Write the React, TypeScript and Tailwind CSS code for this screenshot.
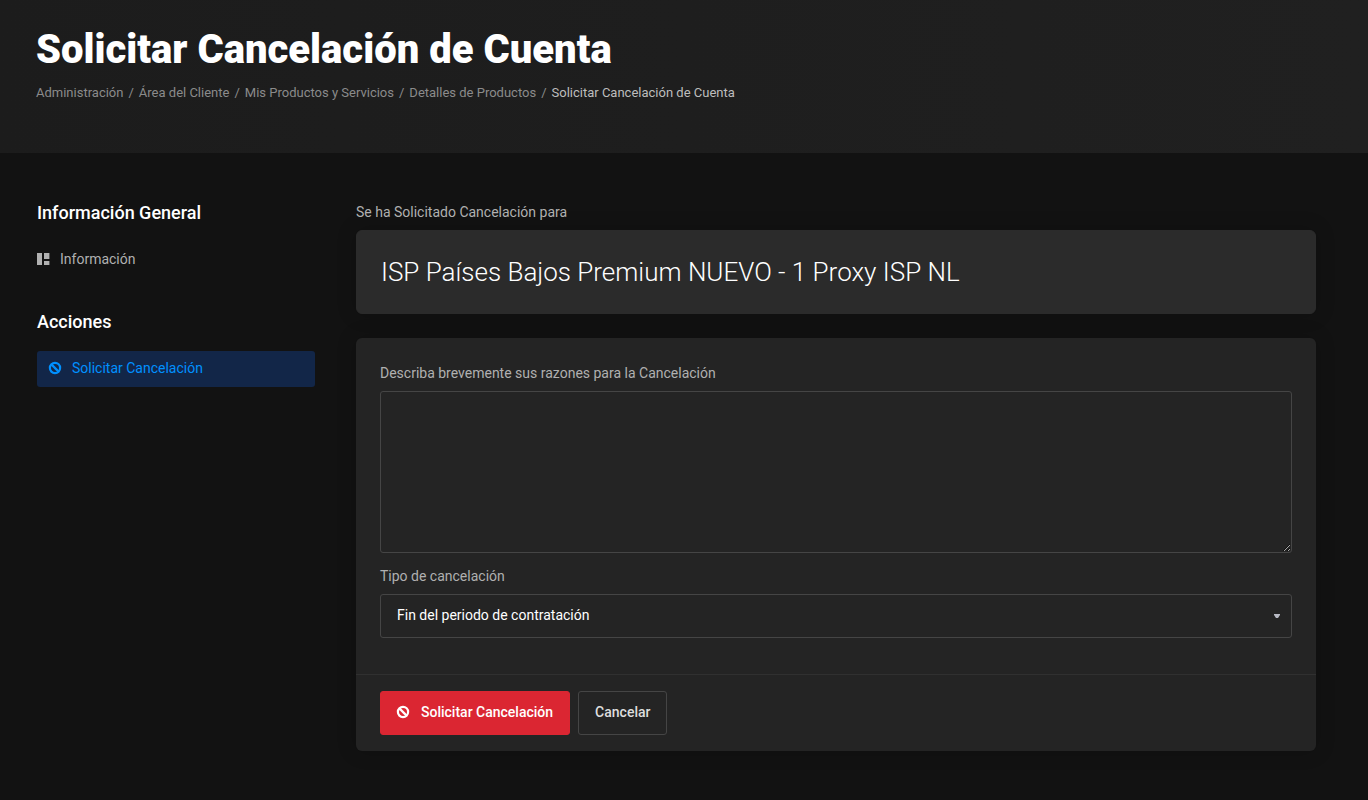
import { useState } from 'react'
import { clsx } from 'clsx'

const BREADCRUMBS = [
  'Administración',
  'Área del Cliente',
  'Mis Productos y Servicios',
  'Detalles de Productos',
]

function BanIcon() {
  return (
    <svg viewBox="0 0 13 12" className="w-[13px] h-3 shrink-0 overflow-visible" fill="none" stroke="currentColor" strokeWidth="2.2" aria-hidden="true">
      <circle cx="6" cy="6" r="5.1" />
      <path d="M2.4 2.4l7.2 7.2" />
    </svg>
  )
}

function PanelIcon() {
  return (
    <svg viewBox="0 0 13 12" className="w-[13px] h-3 shrink-0" fill="currentColor" aria-hidden="true">
      <path d="M0 0h5v12H0zM7 0h5.4v6H7zM7 8h5.4v4H7z" />
    </svg>
  )
}

function PageHeader() {
  return (
    <header className="bg-linear-to-r from-[#1c1c1c] to-[#202020] pl-9 pr-[52px] pt-6 pb-[50px]">
      <h1 className="text-[40px] leading-[52px] font-black text-white">Solicitar Cancelación de Cuenta</h1>
      <nav aria-label="Breadcrumb" className="mt-1.5">
        <ol className="flex flex-wrap text-[13px] leading-[21px] text-[#8b8b8b]">
          {BREADCRUMBS.map(label => (
            <li key={label}>
              <a href="#" className="hover:text-white">{label}</a>
              <span className="px-[5px]">/</span>
            </li>
          ))}
          <li aria-current="page" className="text-[#bdbdbd]">Solicitar Cancelación de Cuenta</li>
        </ol>
      </nav>
    </header>
  )
}

function Sidebar() {
  return (
    <aside className="w-[278px] shrink-0 space-y-8">
      <section>
        <h2 className="mb-[17px] text-lg leading-6 font-medium text-white">Información General</h2>
        <a href="#" className="flex items-center gap-2.5 h-9 pb-0.5 text-sm text-[#b0b0b0]">
          <PanelIcon />
          Información
        </a>
      </section>
      <section>
        <h2 className="mb-[17px] text-lg leading-6 font-medium text-white">Acciones</h2>
        <a href="#" className="flex items-center gap-2.5 h-9 px-3 pb-0.5 rounded-[3px] bg-[#122648] text-sm text-[#0090ff]">
          <BanIcon />
          Solicitar Cancelación
        </a>
      </section>
    </aside>
  )
}

function CancelForm() {
  const [reason, setReason] = useState('')
  const [type, setType] = useState('end')
  const field = 'block w-full rounded-[3px] border border-[#454545] bg-transparent px-4 text-sm text-white outline-none focus:border-[#0090ff]'

  return (
    <form
      onSubmit={e => e.preventDefault()}
      className="mt-6 rounded-md bg-[#242424] shadow-[0_0_20px_rgba(0,0,0,0.2)]"
    >
      <div className="px-6 pt-6 pb-9">
        <label htmlFor="reason" className="block mb-1.5 text-sm leading-[23px]">
          Describa brevemente sus razones para la Cancelación
        </label>
        <textarea
          id="reason"
          value={reason}
          onChange={e => setReason(e.target.value)}
          className={clsx(field, 'h-[162px] py-3 resize-y')}
        />
        <label htmlFor="type" className="block mt-3 mb-1.5 text-sm leading-[23px]">
          Tipo de cancelación
        </label>
        <div className="relative">
          <select
            id="type"
            value={type}
            onChange={e => setType(e.target.value)}
            className={clsx(field, 'h-11 pb-0.5 appearance-none')}
          >
            <option value="end" className="bg-[#242424]">Fin del periodo de contratación</option>
            <option value="now" className="bg-[#242424]">Inmediata</option>
          </select>
          <svg viewBox="0 0 6 4" className="absolute right-3 top-5 w-1.5 h-1 pointer-events-none" fill="#b8bac4" aria-hidden="true">
            <path d="M0 0h6v1L4 4H2L0 1z" />
          </svg>
        </div>
      </div>
      <div className="flex flex-wrap gap-2 border-t border-[#303030] px-6 py-4">
        <button type="submit" className="flex items-center gap-[11px] h-11 px-4 pb-0.5 rounded-[3px] border border-[#db2632] bg-[#db2632] text-sm font-medium text-white">
          <BanIcon />
          Solicitar Cancelación
        </button>
        <button type="button" className="h-11 px-4 pb-0.5 rounded-[3px] border border-[#454545] text-sm font-medium text-[#dedede]">
          Cancelar
        </button>
      </div>
    </form>
  )
}

export default function App() {
  return (
    <div className="min-h-screen bg-[#121212] font-[Roboto,sans-serif] text-[#b0b0b0]">
      <PageHeader />
      <div className="flex gap-[41px] pl-[37px] pr-[52px] py-12">
        <Sidebar />
        <main className="flex-1 min-w-0">
          <p className="mb-1.5 text-sm leading-[23px]">Se ha Solicitado Cancelación para</p>
          <div className="rounded-md border border-[#2b2b2b] bg-[#2b2b2b] px-6 py-[23px] shadow-[0_0_20px_rgba(0,0,0,0.2)]">
            <h3 className="text-[26px] leading-9 font-light text-white">
              ISP Países Bajos Premium NUEVO - 1 Proxy ISP NL
            </h3>
          </div>
          <CancelForm />
        </main>
      </div>
    </div>
  )
}
